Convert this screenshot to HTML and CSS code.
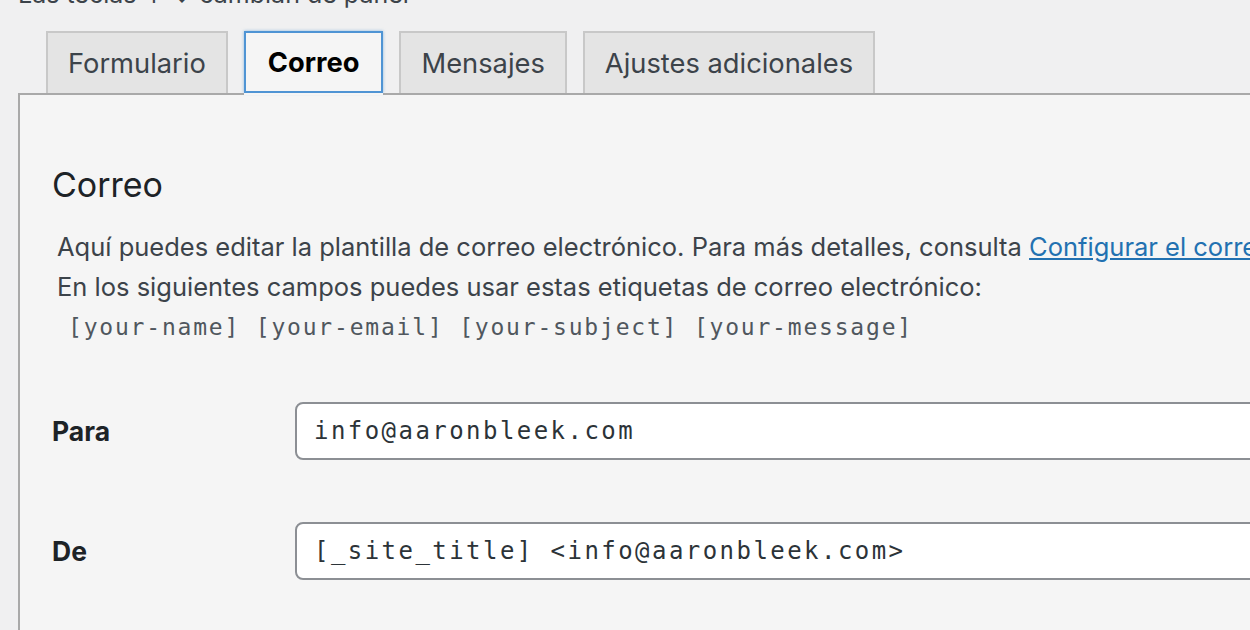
FILE: index.html
```html
<!DOCTYPE html>
<html lang="es">
<head>
    <meta charset="UTF-8">
    <meta name="viewport" content="width=device-width, initial-scale=1.0">
    <title>Correo</title>
    <link rel="stylesheet" href="styles.css">
</head>
<body>
    <!-- aviso de teclado, casi fuera de la vista -->
    <p class="keys-hint">Las teclas ↑ ↓ cambian de panel</p>

    <!-- pestañas -->
    <ul class="editor-tabs">
        <li class="tab">Formulario</li>
        <li class="tab active">Correo</li>
        <li class="tab">Mensajes</li>
        <li class="tab">Ajustes adicionales</li>
    </ul>

    <!-- panel de correo -->
    <div class="editor-panel">
        <h2 class="panel-title">Correo</h2>
        <div class="panel-desc">
            <p>Aquí puedes editar la plantilla de correo electrónico. Para más detalles, consulta <a href="#">Configurar el correo</a>.</p>
            <p>En los siguientes campos puedes usar estas etiquetas de correo electrónico:</p>
            <p class="mail-tags">[your-name] [your-email] [your-subject] [your-message]</p>
        </div>

        <div class="field-row">
            <label class="field-label" for="mail-to">Para</label>
            <input class="field-input" id="mail-to" type="text" value="info@aaronbleek.com">
        </div>
        <div class="field-row">
            <label class="field-label" for="mail-from">De</label>
            <input class="field-input" id="mail-from" type="text" value="[_site_title] <info@aaronbleek.com>">
        </div>
    </div>
</body>
</html>
```

FILE: styles.css
```css
body {
    margin: 0;
    background-color: #f0f0f1;
    font-family: Inter, "Noto Sans", sans-serif;
    color: #3c434a;
    overflow: hidden;
}
.keys-hint {
    margin: -6px 0 0 18px;
    height: 37px;
    line-height: 0;
    font-size: 25px;
    color: #3c434a;
}
.editor-tabs {
    display: flex;
    gap: 16px;
    list-style: none;
    margin: 0 0 0 46px;
    padding: 0;
}
.tab {
    box-sizing: border-box;
    height: 62px;
    padding: 0 20px;
    display: flex;
    align-items: center;
    font-size: 27.3px;
    color: #3c434a;
    background-color: #e4e4e4;
    border: 2px solid #c8c8c8;
    border-bottom: none;
}
.tab.active {
    position: relative;
    z-index: 1;
    padding: 0 22px;
    font-weight: 700;
    color: #000;
    background-color: #f5f5f5;
    border: 2px solid #4f94d4;
    box-shadow: 0 2px 0 #f5f5f5, 0 0 3px rgba(79, 148, 212, 0.6);
}
.editor-panel {
    margin-left: 18px;
    min-height: 600px;
    padding: 68px 0 0 32px;
    background-color: #f5f5f5;
    border-top: 2px solid #a9a9a9;
    border-left: 2px solid #a9a9a9;
}
.panel-title {
    margin: 0 0 20px;
    font-size: 34px;
    font-weight: 400;
    line-height: 44px;
    color: #1d2327;
}
.panel-desc {
    padding-left: 5px;
}
.panel-desc p {
    margin: 0;
    font-size: 25.5px;
    line-height: 40px;
    white-space: nowrap;
}
.panel-desc a {
    color: #2271b1;
}
.mail-tags {
    padding-left: 11px;
    font-family: "DejaVu Sans Mono", monospace;
    font-size: 23px !important;
    letter-spacing: 1.8px;
    color: #50575e;
}
.field-row {
    display: flex;
    align-items: center;
    margin-top: 55px;
}
.field-row + .field-row {
    margin-top: 62px;
}
.field-label {
    flex-shrink: 0;
    width: 243px;
    font-size: 26.5px;
    font-weight: 700;
    color: #1d2327;
}
.field-input {
    box-sizing: border-box;
    flex-shrink: 0;
    width: 1000px;
    height: 58px;
    padding: 0 17px;
    font-family: "DejaVu Sans Mono", monospace;
    font-size: 24px;
    letter-spacing: 2.45px;
    color: #2c3338;
    background-color: #fff;
    border: 2px solid #8c8f94;
    border-radius: 8px;
}
```
